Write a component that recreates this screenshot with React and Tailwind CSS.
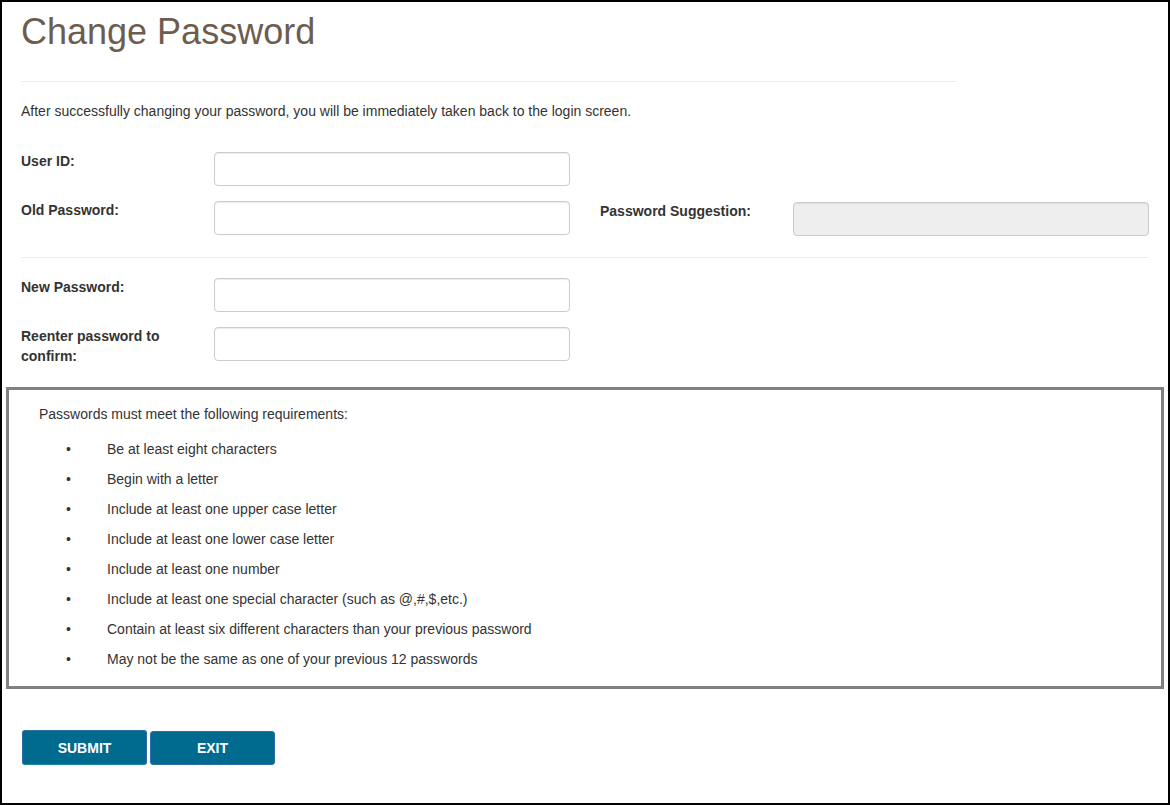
import React from "react";

const reqs = [
  "Be at least eight characters",
  "Begin with a letter",
  "Include at least one upper case letter",
  "Include at least one lower case letter",
  "Include at least one number",
  "Include at least one special character (such as @,#,$,etc.)",
  "Contain at least six different characters than your previous password",
  "May not be the same as one of your previous 12 passwords",
];

function Input({ disabled }) {
  return (
    <div
      className={
        "w-[356px] h-[34px] rounded-[4px] border border-[#cccccc] shadow-[inset_0_1px_1px_rgba(0,0,0,0.075)] " +
        (disabled ? "bg-[#eeeeee]" : "bg-white")
      }
    />
  );
}

export default function App() {
  return (
    <div
      className="w-[1170px] h-[805px] border-2 border-black bg-white text-[#333333] text-[14px] leading-[20px] overflow-hidden"
      style={{ fontFamily: '"Liberation Sans", Arial, sans-serif' }}
    >
      <div className="pl-[19px] pt-[10px]">
        <h1 className="text-[36px] leading-[40px] text-[#6d5d4f] font-normal">Change Password</h1>
        <div className="mt-[29px] w-[936px] h-px bg-[#eeeeee]" />
        <p className="mt-[19px]">
          After successfully changing your password, you will be immediately taken back to the login screen.
        </p>
        <div className="mt-[30px] flex flex-col">
          <div className="flex items-start">
            <label className="w-[193px] font-bold">User ID:</label>
            <div className="mt-px"><Input /></div>
          </div>
          <div className="mt-[14px] flex items-start">
            <label className="w-[193px] font-bold">Old Password:</label>
            <div className="mt-px"><Input /></div>
            <label className="ml-[30px] w-[193px] font-bold mt-px">Password Suggestion:</label>
            <div className="mt-[2px]"><Input disabled /></div>
          </div>
        </div>
        <div className="mt-[21px] w-[1128px] h-px bg-[#eeeeee]" />
        <div className="mt-[19px] flex flex-col">
          <div className="flex items-start">
            <label className="w-[193px] font-bold">New Password:</label>
            <div className="mt-px"><Input /></div>
          </div>
          <div className="mt-[14px] flex items-start">
            <label className="w-[193px] font-bold pr-[40px]">Reenter password to confirm:</label>
            <div className="mt-px"><Input /></div>
          </div>
        </div>
      </div>
      <div className="ml-[4px] mt-[21px] w-[1158px] h-[302px] border-[3px] border-[#808080] pl-[30px] pt-[14px]">
        <p>Passwords must meet the following requirements:</p>
        <ul className="mt-[15px] flex flex-col gap-[10px]">
          {reqs.map((r) => (
            <li key={r} className="flex">
              <span className="w-[68px] pl-[27px]">•</span>
              <span>{r}</span>
            </li>
          ))}
        </ul>
      </div>
      <div className="ml-[20px] mt-[41px] flex items-center gap-[3px]">
        <button className="w-[125px] h-[35px] rounded-[3px] border border-[#2d6ea8] border-b-[#1a8aa3] bg-[#006b8f] text-white font-bold text-[14px]">
          SUBMIT
        </button>
        <button className="w-[125px] h-[34px] rounded-[3px] border border-[#2d6ea8] bg-[#006b8f] text-white font-bold text-[14px]">
          EXIT
        </button>
      </div>
    </div>
  );
}
